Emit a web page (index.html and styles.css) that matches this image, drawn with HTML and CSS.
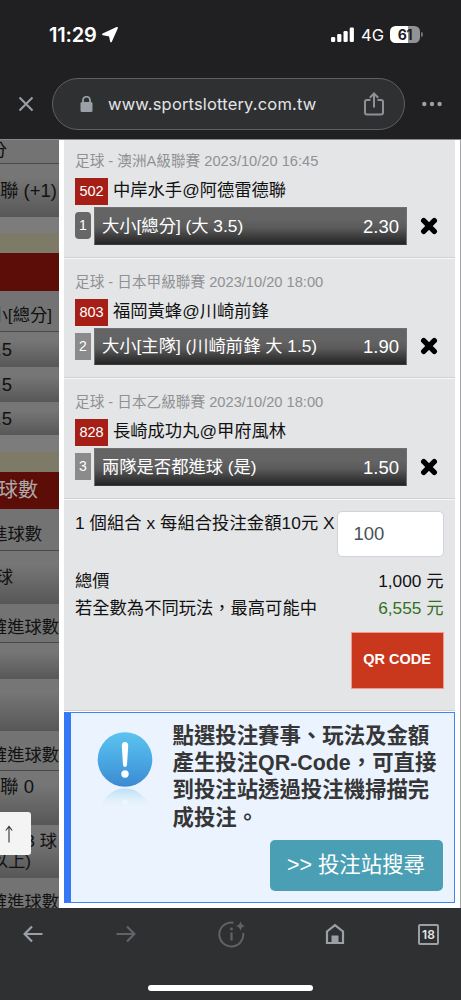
FILE: index.html
```html
<!DOCTYPE html>
<html lang="zh-Hant">
<head>
<meta charset="utf-8">
<title>台灣運彩</title>
<link rel="stylesheet" href="styles.css">
</head>
<body>
<div class="phone">
  <header class="top">
    <div class="status">
      <span class="clock">11:29</span>
      <svg class="loc" width="16" height="16" viewBox="0 0 16 16"><path d="M15 .8 9 14.400 7.800 8.500 1 7.300Z" fill="#fff" stroke="#fff" stroke-width="1.800" stroke-linejoin="round"/></svg>
      <svg class="signal" width="24" height="16" viewBox="0 0 24 16" fill="#fff"><rect x="0" y="10" width="4.200" height="5" rx="1.200"/><rect x="6.200" y="7" width="4.200" height="8" rx="1.200"/><rect x="12.500" y="4" width="4.200" height="11" rx="1.200"/><rect x="18.700" y="0.500" width="4.200" height="14.500" rx="1.200"/></svg>
      <span class="net">4G</span>
      <span class="battery">61</span><i class="nub"></i>
    </div>
    <div class="address">
      <svg class="close" width="16" height="16" viewBox="0 0 16 16"><path d="M1.500 1.500 14.500 14.500M14.500 1.500 1.500 14.500" stroke="#9aa0a6" stroke-width="2" fill="none"/></svg>
      <div class="pill">
        <svg width="13" height="17" viewBox="0 0 13 17"><rect x="0.500" y="6" width="12" height="10" rx="1.500" fill="#9aa0a6"/><path d="M3 7V4.200a3.500 3.500 0 0 1 7 0V7" fill="none" stroke="#9aa0a6" stroke-width="1.800"/></svg>
        <span class="url">www.sportslottery.com.tw</span>
        <svg class="share" width="20" height="24" viewBox="0 0 20 24" fill="none" stroke="#8e9297" stroke-width="2"><path d="M6.500 8H3a2 2 0 0 0-2 2V20.500a2 2 0 0 0 2 2H17a2 2 0 0 0 2-2V10a2 2 0 0 0-2-2H13.500M10 15.500V2M5.800 5.700 10 1.500 14.200 5.700"/></svg>
      </div>
      <svg class="more" width="20" height="6" viewBox="0 0 20 6" fill="#9aa0a6"><circle cx="2.300" cy="3" r="2.200"/><circle cx="10" cy="3" r="2.200"/><circle cx="17.600" cy="3" r="2.200"/></svg>
    </div>
  </header>

  <main class="page">
    <aside class="odds">
      <div class="r head h24"><span class="p52">分</span></div>
      <div class="r cell h53"><span class="p2 big">聯 (+1)</span></div>
      <div class="r plain h16"></div>
      <div class="r beige h20"></div>
      <div class="r red h37"></div>
      <div class="r head h42 low"><span class="p7">小[總分]</span></div>
      <div class="r cell h35"><span class="p47 big">.5</span></div>
      <div class="r cell h35"><span class="p47 big">.5</span></div>
      <div class="r cell h33"><span class="p47 big">.5</span></div>
      <div class="r plain h17"></div>
      <div class="r beige h20"></div>
      <div class="r red h37"><span class="p21">球數</span></div>
      <div class="r head h42 low"><span class="p17">進球數</span></div>
      <div class="r cell h53"><span class="p46">球</span></div>
      <div class="r head h39 low"><span>確進球數</span></div>
      <div class="r cell h36"></div>
      <div class="r cell h52"></div>
      <div class="r head h40 low"><span>確進球數</span></div>
      <div class="r cell h54 up"><span class="p25 big">聯 0</span></div>
      <div class="r cell h52 two"><span class="p2">3 球</span><span class="p28">以上)</span></div>
      <div class="r head h32 low"><span>確進球數</span></div>
    </aside>

    <section class="slip">
      <article class="bet first">
        <p class="meta">足球 - 澳洲A級聯賽 2023/10/20 16:45</p>
        <div class="match"><b class="no">502</b><span>中岸水手@阿德雷德聯</span></div>
        <div class="pick"><i class="rank on">1</i><div class="bar"><span>大小[總分] (大 3.5)</span><span class="odd">2.30</span></div><svg class="x" width="18" height="18" viewBox="0 0 18 18"><path d="M3.700 3.700 14.300 14.300M14.300 3.700 3.700 14.300" stroke="#000" stroke-width="5.400" stroke-linecap="round"/></svg></div>
      </article>
      <article class="bet">
        <p class="meta">足球 - 日本甲級聯賽 2023/10/20 18:00</p>
        <div class="match"><b class="no">803</b><span>福岡黃蜂@川崎前鋒</span></div>
        <div class="pick"><i class="rank">2</i><div class="bar"><span>大小[主隊] (川崎前鋒 大 1.5)</span><span class="odd">1.90</span></div><svg class="x" width="18" height="18" viewBox="0 0 18 18"><path d="M3.700 3.700 14.300 14.300M14.300 3.700 3.700 14.300" stroke="#000" stroke-width="5.400" stroke-linecap="round"/></svg></div>
      </article>
      <article class="bet">
        <p class="meta">足球 - 日本乙級聯賽 2023/10/20 18:00</p>
        <div class="match"><b class="no">828</b><span>長崎成功丸@甲府風林</span></div>
        <div class="pick"><i class="rank">3</i><div class="bar"><span>兩隊是否都進球 (是)</span><span class="odd">1.50</span></div><svg class="x" width="18" height="18" viewBox="0 0 18 18"><path d="M3.700 3.700 14.300 14.300M14.300 3.700 3.700 14.300" stroke="#000" stroke-width="5.400" stroke-linecap="round"/></svg></div>
      </article>

      <div class="calc">
        <div class="stake"><span>1 個組合 x 每組合投注金額10元 X</span><div class="amount">100</div></div>
        <div class="sum"><span>總價</span><span>1,000 元</span></div>
        <div class="sum"><span>若全數為不同玩法，最高可能中</span><span class="win">6,555 元</span></div>
        <div class="qr">QR CODE</div>
      </div>

      <div class="notice">
        <svg class="info" width="56" height="80" viewBox="0 0 56 80">
          <defs>
            <linearGradient id="ball" x1="0" y1="0" x2="0" y2="1"><stop offset="0" stop-color="#5cc3ee"/><stop offset=".5" stop-color="#4aa9e4"/><stop offset="1" stop-color="#3d89d0"/></linearGradient>
            <linearGradient id="glow" x1="0" y1="0" x2="0" y2="1"><stop offset="0" stop-color="#a9daf3" stop-opacity=".75"/><stop offset="1" stop-color="#d3ecfa" stop-opacity="0"/></linearGradient>
          </defs>
          <circle cx="28" cy="27.500" r="27.300" fill="url(#ball)"/>
          <path d="M24.800 13.500q0-3.500 3.200-3.500t3.200 3.500L30 32.500q-.2 2.500-2 2.500t-2-2.500Z" fill="#fff"/><circle cx="28" cy="42" r="3.700" fill="#fff"/>
          <path d="M3.500 74Q12 56.500 28 56.500T52.500 74Z" fill="url(#glow)"/><circle cx="28" cy="70" r="2.800" fill="#f2f8ff" opacity=".7"/>
        </svg>
        <div class="text">點選投注賽事、玩法及金額<br>產生投注QR-Code，可直接<br>到投注站透過投注機掃描完<br>成投注。</div>
        <div class="find">&gt;&gt; 投注站搜尋</div>
      </div>
    </section>
    <div class="up-btn"><svg width="10" height="18" viewBox="0 0 10 18" fill="none" stroke="#333" stroke-width="1.100"><path d="M5 17.500V1.500M1.800 5.500 5 1.500 8.200 5.500"/></svg></div>
  </main>

  <footer class="bottom">
    <nav class="tools">
      <svg class="back" width="20" height="18" viewBox="0 0 20 18" fill="none" stroke="#9aa0a6" stroke-width="2.200"><path d="M19.500 9H2M9 1.500 1.600 9 9 16.500"/></svg>
      <svg class="fwd" width="20" height="18" viewBox="0 0 20 18" fill="none" stroke="#606468" stroke-width="2.200"><path d="M.5 9H18M11 1.500 18.400 9 11 16.500"/></svg>
      <svg class="ai" width="28" height="28" viewBox="0 0 28 28" fill="none" stroke="#606468" stroke-width="1.900"><path d="M15.500 2.700A12 12 0 1 0 25.200 13"/><path d="M13.500 12.500V20.500" stroke-width="2.200"/><circle cx="13.500" cy="9" r="1.400" fill="#606468" stroke="none"/><path d="M22.500 1.200Q23.200 5.300 27.300 6 23.200 6.700 22.500 10.800 21.800 6.700 17.700 6 21.800 5.300 22.500 1.200Z" fill="#606468" stroke="none"/></svg>
      <svg class="home" width="20" height="22" viewBox="0 0 20 22"><path d="M2 20V8.500L10 2.200 18 8.500V20Z" fill="none" stroke="#9aa0a6" stroke-width="2.200"/><path d="M6.500 12.500h7V21h-7Z" fill="#9aa0a6"/></svg>
      <span class="tabs">18</span>
    </nav>
    <div class="grip"></div>
  </footer>
</div>
</body>
</html>
```
FILE: styles.css
```css
* { box-sizing: border-box; }
body { margin: 0; background: #2f3032; }
b, i { font-style: normal; font-weight: 400; }
p { margin: 0; }
svg { display: block; flex: none; }

.phone {
  width: 461px; height: 1000px; overflow: hidden;
  display: flex; flex-direction: column;
  font-family: "Liberation Sans", "Noto Sans CJK TC", sans-serif;
  font-size: 17.3px; color: #111;
}

.top { height: 139px; flex: none; background: #202022; }
.status {
  height: 78px; padding: 0 38px 9px 49px; display: flex; align-items: center;
  color: #fff; font-family: Inter, sans-serif;
}
.clock { font-size: 20px; font-weight: 600; letter-spacing: -.2px; width: 53px; }
.signal { margin-left: auto; }
.net { font-size: 16.500px; margin-left: 6px; width: 22px; margin-right: 7px; }
.battery {
  width: 30px; height: 17px; border-radius: 5.500px; color: #202022;
  background: linear-gradient(90deg, #fff 61%, #929294 61%);
  font-size: 14px; line-height: 17px; font-weight: 700; text-align: center; letter-spacing: -.3px;
}
.nub { width: 2px; height: 5px; margin-left: 1px; background: #707072; border-radius: 0 2px 2px 0; }
.address { display: flex; align-items: center; padding-left: 18px; }
.pill {
  width: 353px; height: 52px; margin-left: 18px; padding: 0 20px 0 27px;
  display: flex; align-items: center;
  background: #2f3032; border: 1px solid #5c5f63; border-radius: 26px;
}
.url { font-family: Inter, sans-serif; font-size: 16.500px; letter-spacing: .17px; color: #e3e4e6; margin-left: 15px; white-space: nowrap; }
.share { margin-left: auto; }
.more { margin-left: 17px; }

.page { height: 769px; flex: none; display: flex; position: relative; background: #fff; border-top: 1px solid #88898b; }

.odds { width: 59px; overflow: hidden; background: #767676; flex: none; }
.r { display: flex; align-items: center; justify-content: flex-end; white-space: nowrap; line-height: 20px; }
.r span { flex: none; }
.r .big { font-size: 18.500px; }
.head { background: #737373; border-bottom: 1px solid #484848; }
.cell { background: linear-gradient(#767676 25%, #575757); }
.plain { background: #7c7c7c; }
.beige { background: #7d7b68; }
.red { background: #5d0d07; color: #aaa; font-size: 20px; }
.low { padding-top: 9px; }
.up { padding-bottom: 22px; }
.two { flex-direction: column; align-items: flex-end; justify-content: center; padding-bottom: 1px; }
.h16 { height: 16px; } .h17 { height: 16.500px; } .h20 { height: 20px; } .h24 { height: 24px; padding-bottom: 4px; }
.h32 { height: 40px; } .h33 { height: 33px; } .h35 { height: 35px; } .h36 { height: 36px; }
.h37 { height: 37.500px; } .h39 { height: 39px; } .h40 { height: 40px; } .h42 { height: 41.500px; }
.h52 { height: 52.500px; } .h53 { height: 53px; } .h54 { height: 54px; }
.p2 { margin-right: 2px; } .p7 { margin-right: 7px; } .p17 { margin-right: 17px; }
.p21 { margin-right: 21px; } .p25 { margin-right: 25px; } .p28 { margin-right: 28px; }
.p46 { margin-right: 46px; } .p47 { margin-right: 47px; } .p52 { margin-right: 52px; }

.slip { width: 402px; padding-left: 5px; padding-right: 5.500px; border-right: 1px solid #a5a5a5; }
.bet {
  height: 120.500px; padding: 14px 0 0 11px; background: #e4e5e7;
  border-bottom: 1.500px solid #cfd0d2; box-shadow: inset 0 1px #f8f8f8;
}
.first { height: 117.500px; padding-top: 11px; box-shadow: none; }
.meta { font-size: 14.650px; line-height: 20px; color: #909193; white-space: nowrap; }
.match { display: flex; align-items: center; height: 27px; margin-top: 7px; white-space: nowrap; }
.no { width: 33px; height: 27px; line-height: 27px; background: #a51f17; color: #fff; font-size: 14.500px; text-align: center; margin-right: 5px; }
.match span { line-height: 24px; margin-top: -3px; }
.pick { display: flex; align-items: center; margin-top: 2px; height: 37.500px; }
.rank { width: 16px; height: 27px; line-height: 26px; background: #8b8b8b; color: #fff; font-size: 14px; text-align: center; margin-right: 3px; }
.on { background: #676767; border-radius: 4px; }
.bar {
  width: 313px; height: 37.500px; padding: 0 7px; display: flex; justify-content: space-between; align-items: center;
  background: linear-gradient(#646464 30%, #5a5a5a 55%, #242424); border: 1px solid #707070; border-bottom-color: #3a3a3a;
  color: #fff; white-space: nowrap; line-height: 24px;
}
.odd { font-size: 18.500px; padding-top: 2px; }
.x { margin-left: 12.500px; }

.calc { height: 212px; background: #e4e5e7; padding: 12px 11px 0; border-bottom: 1.500px solid #cfd0d2; box-shadow: inset 0 1px #f8f8f8; }
.stake { display: flex; justify-content: space-between; height: 57.500px; white-space: nowrap; line-height: 24px; }
.stake span { letter-spacing: .07px; }
.amount { width: 107px; height: 46.500px; flex: none; border: 1.500px solid #ced4da; border-radius: 5px; background: #fff; color: #495057; font-size: 18.500px; line-height: 44px; padding-left: 16px; }
.sum { display: flex; justify-content: space-between; line-height: 27px; white-space: nowrap; }
.win { color: #347022; }
.qr { width: 93px; height: 57px; margin: 10px 0 0 auto; background: #c9371d; border: 1.500px solid #f19b93; color: #fff; font-weight: 700; font-size: 14.500px; line-height: 53px; text-align: center; white-space: nowrap; }

.notice {
  height: 190.500px; margin-top: 1.500px; background: #eaf3fe;
  border: 1.500px solid #3f83f8; border-left: 7px solid #3478f6;
  display: grid; grid-template-columns: 101.500px 1fr; grid-template-rows: 126.500px 51px; padding: 0 11px 0 0;
}
.info { margin: 18.500px 0 0 25.500px; }
.text { padding-top: 10px; font-size: 21.400px; line-height: 27.200px; font-weight: 700; color: #363636; white-space: nowrap; }
.find { grid-column: 1 / 3; justify-self: end; width: 173px; height: 51px; border-radius: 5px; background: #4a9fb5; color: #fff; font-size: 21.400px; line-height: 50px; text-align: center; white-space: nowrap; }

.up-btn {
  position: absolute; left: -4px; top: 672px; width: 35px; height: 43px; padding-right: 9px;
  background: #f4f4f4; border-radius: 3px; display: flex; align-items: center; justify-content: center;
}

.bottom { flex: 1; background: #2f3032; }
.tools { height: 52px; display: flex; align-items: center; }
.back { margin-left: 23px; }
.fwd { margin-left: 73px; }
.ai { margin-left: 82px; }
.home { margin-left: 79px; }
.tabs { margin-left: 73px; width: 21px; height: 21px; border: 2px solid #9aa0a6; border-radius: 2px; color: #e6e7e9; font: 600 12px/17px Inter, sans-serif; text-align: center; }
.grip { width: 165px; height: 6px; margin: 25px auto 0; border-radius: 3px; background: #fff; }
```
